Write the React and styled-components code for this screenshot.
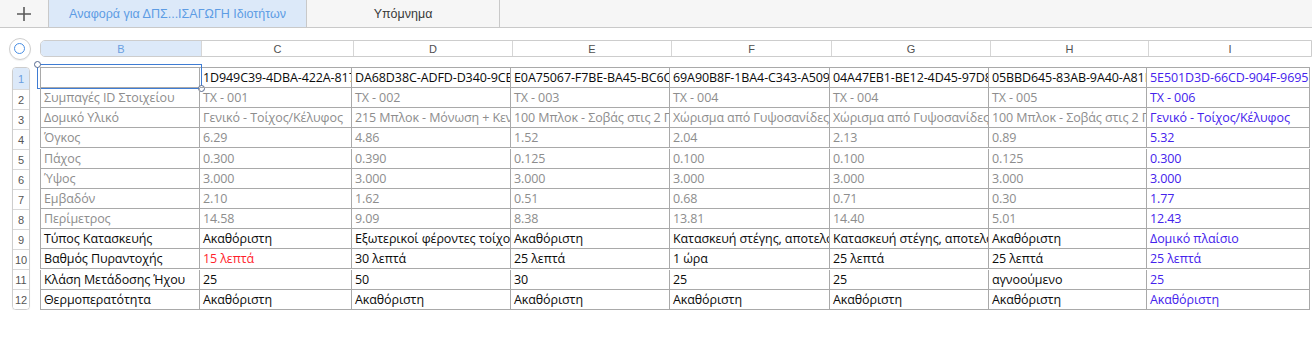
import React from "react";
import styled, { createGlobalStyle } from "styled-components";

const GlobalStyle = createGlobalStyle`
  html, body {
    margin: 0;
    padding: 0;
    background: #ffffff;
  }
  body {
    font-family: "Liberation Sans", Arial, sans-serif;
  }
`;

const COLS = [
  { key: "B", width: 160 },
  { key: "C", width: 152 },
  { key: "D", width: 159 },
  { key: "E", width: 159 },
  { key: "F", width: 160 },
  { key: "G", width: 159 },
  { key: "H", width: 158 },
  { key: "I", width: 163 },
];

const GRID_COLS = COLS.map((c) => `${c.width}px`).join(" ");

// tone: "id" (black), "prop" (gray), "text" (black)
const ROWS = [
  {
    tone: "id",
    cells: [
      "",
      "1D949C39-4DBA-422A-817",
      "DA68D38C-ADFD-D340-9CB",
      "E0A75067-F7BE-BA45-BC6C-",
      "69A90B8F-1BA4-C343-A509",
      "04A47EB1-BE12-4D45-97D8",
      "05BBD645-83AB-9A40-A81F",
      "5E501D3D-66CD-904F-9695",
    ],
  },
  {
    tone: "prop",
    cells: ["Συμπαγές ID Στοιχείου", "TX - 001", "TX - 002", "TX - 003", "TX - 004", "TX - 004", "TX - 005", "TX - 006"],
  },
  {
    tone: "prop",
    cells: [
      "Δομικό Υλικό",
      "Γενικό - Τοίχος/Κέλυφος",
      "215 Μπλοκ - Μόνωση + Κεν",
      "100 Μπλοκ - Σοβάς στις 2 Π",
      "Χώρισμα από Γυψοσανίδες",
      "Χώρισμα από Γυψοσανίδες",
      "100 Μπλοκ - Σοβάς στις 2 Π",
      "Γενικό - Τοίχος/Κέλυφος",
    ],
  },
  { tone: "prop", cells: ["Όγκος", "6.29", "4.86", "1.52", "2.04", "2.13", "0.89", "5.32"] },
  { tone: "prop", cells: ["Πάχος", "0.300", "0.390", "0.125", "0.100", "0.100", "0.125", "0.300"] },
  { tone: "prop", cells: ["Ύψος", "3.000", "3.000", "3.000", "3.000", "3.000", "3.000", "3.000"] },
  { tone: "prop", cells: ["Εμβαδόν", "2.10", "1.62", "0.51", "0.68", "0.71", "0.30", "1.77"] },
  { tone: "prop", cells: ["Περίμετρος", "14.58", "9.09", "8.38", "13.81", "14.40", "5.01", "12.43"] },
  {
    tone: "text",
    cells: [
      "Τύπος Κατασκευής",
      "Ακαθόριστη",
      "Εξωτερικοί φέροντες τοίχοι",
      "Ακαθόριστη",
      "Κατασκευή στέγης, αποτελο",
      "Κατασκευή στέγης, αποτελο",
      "Ακαθόριστη",
      "Δομικό πλαίσιο",
    ],
  },
  {
    tone: "text",
    cells: ["Βαθμός Πυραντοχής", "15 λεπτά", "30 λεπτά", "25 λεπτά", "1 ώρα", "25 λεπτά", "25 λεπτά", "25 λεπτά"],
    alert: 1,
  },
  { tone: "text", cells: ["Κλάση Μετάδοσης Ήχου", "25", "50", "30", "25", "25", "αγνοούμενο", "25"] },
  {
    tone: "text",
    cells: ["Θερμοπερατότητα", "Ακαθόριστη", "Ακαθόριστη", "Ακαθόριστη", "Ακαθόριστη", "Ακαθόριστη", "Ακαθόριστη", "Ακαθόριστη"],
  },
];

const TabBar = styled.div`
  display: flex;
  height: 27px;
  background: #f6f6f6;
  border-bottom: 1px solid #c9c9c9;
`;

const AddButton = styled.div`
  width: 48px;
  display: flex;
  align-items: center;
  justify-content: center;
`;

const Tab = styled.div`
  width: ${(p) => p.$width}px;
  display: flex;
  align-items: center;
  justify-content: center;
  font-size: 12.5px;
  color: ${(p) => (p.$active ? "#5d9ce4" : "#3a3a3a")};
  background: ${(p) => (p.$active ? "#dce9f9" : "transparent")};
  border-left: ${(p) => (p.$active ? "1px solid #c9c9c9" : "none")};
  border-right: 1px solid #c9c9c9;
  box-sizing: border-box;
`;

const Sheet = styled.div`
  padding-top: 12px;
`;

const HeaderLine = styled.div`
  display: flex;
  align-items: center;
  height: 17px;
`;

const Corner = styled.div`
  width: 40px;
  display: flex;
  justify-content: center;
`;

const CornerCircle = styled.div`
  width: 22px;
  height: 22px;
  margin-left: -1px;
  border-radius: 50%;
  border: 1px solid #cfcfcf;
  background: #ffffff;
  box-sizing: border-box;
  display: flex;
  align-items: center;
  justify-content: center;
  box-shadow: 0 1px 1px rgba(0, 0, 0, 0.06);
`;

const CornerDot = styled.div`
  width: 11px;
  height: 11px;
  border-radius: 50%;
  border: 1.5px solid #4a8fe4;
  box-sizing: border-box;
`;

const ColumnHeaders = styled.div`
  display: grid;
  grid-template-columns: ${GRID_COLS};
  height: 17px;
  box-sizing: border-box;
  border: 1px solid #cdcdcd;
  border-radius: 5px 0 0 5px;
  overflow: hidden;
`;

const ColumnHeader = styled.div`
  display: flex;
  align-items: center;
  justify-content: center;
  font-size: 11px;
  color: ${(p) => (p.$selected ? "#6a9fe0" : "#505050")};
  background: ${(p) => (p.$selected ? "#dce9f9" : "#ffffff")};
  border-left: ${(p) => (p.$first ? "none" : "1px solid #d6d6d6")};
`;

const Body = styled.div`
  display: flex;
  margin-top: 10px;
`;

const RowRail = styled.div`
  width: 40px;
  padding-left: 12px;
  box-sizing: border-box;
`;

const RowHeaders = styled.div`
  width: 18px;
  border: 1px solid #cdcdcd;
  border-radius: 4px;
  overflow: hidden;
  box-sizing: border-box;
  box-shadow: 0 1px 1px rgba(0, 0, 0, 0.08);
`;

const RowHeader = styled.div`
  height: ${(p) => (p.$first ? 21 : 20)}px;
  display: flex;
  align-items: center;
  justify-content: center;
  font-size: 11px;
  color: ${(p) => (p.$selected ? "#6a9fe0" : "#555555")};
  background: ${(p) => (p.$selected ? "#dce9f9" : "#ffffff")};
  border-top: ${(p) => (p.$first ? "none" : "1px solid #d9d9d9")};
  box-sizing: border-box;
`;

const Grid = styled.div`
  display: grid;
  grid-template-columns: ${GRID_COLS};
  border-top: 1px solid #a9a9a9;
`;

const toneColor = {
  id: "#0b0b0b",
  prop: "#8d8d8d",
  text: "#0b0b0b",
};

const Cell = styled.div`
  position: relative;
  height: 20px;
  box-sizing: border-box;
  border-right: 1px solid #a9a9a9;
  border-bottom: 1px solid #a9a9a9;
  border-left: ${(p) => (p.$lead ? "1px solid #a9a9a9" : "none")};
  padding: 0 0 0 3px;
  font-family: "Open Sans", "Liberation Sans", sans-serif;
  font-size: 12.5px;
  line-height: 19px;
  letter-spacing: -0.1px;
  white-space: nowrap;
  overflow: ${(p) => (p.$selected ? "visible" : "hidden")};
  color: ${(p) => (p.$alert ? "#ff1e2c" : p.$accent ? "#4422ec" : toneColor[p.$tone])};
`;

const Selection = styled.div`
  position: absolute;
  top: -4px;
  left: -4px;
  right: -3px;
  bottom: -2px;
  border: 1px solid #3f7cd3;
  pointer-events: none;
`;

const Handle = styled.div`
  position: absolute;
  width: 7px;
  height: 7px;
  border-radius: 50%;
  background: #ffffff;
  border: 1.5px solid #56698f;
  box-sizing: border-box;
  ${(p) => (p.$end ? "right: -4px; bottom: -4px;" : "left: -4px; top: -4px;")}
`;

function PlusIcon() {
  return (
    <svg width="16" height="16" viewBox="0 0 16 16">
      <path d="M8 1v14M1 8h14" stroke="#5a5a5a" strokeWidth="1.6" fill="none" />
    </svg>
  );
}

export default function App() {
  return (
    <>
      <GlobalStyle />
      <TabBar>
        <AddButton>
          <PlusIcon />
        </AddButton>
        <Tab $width={259} $active>
          Αναφορά για ΔΠΣ...ΙΣΑΓΩΓΗ Ιδιοτήτων
        </Tab>
        <Tab $width={193}>Υπόμνημα</Tab>
      </TabBar>
      <Sheet>
        <HeaderLine>
          <Corner>
            <CornerCircle>
              <CornerDot />
            </CornerCircle>
          </Corner>
          <ColumnHeaders>
            {COLS.map((c, i) => (
              <ColumnHeader key={c.key} $first={i === 0} $selected={i === 0}>
                {c.key}
              </ColumnHeader>
            ))}
          </ColumnHeaders>
        </HeaderLine>
        <Body>
          <RowRail>
            <RowHeaders>
              {ROWS.map((r, i) => (
                <RowHeader key={i} $first={i === 0} $selected={i === 0}>
                  {i + 1}
                </RowHeader>
              ))}
            </RowHeaders>
          </RowRail>
          <Grid>
            {ROWS.map((r, ri) =>
              r.cells.map((text, ci) => {
                const selected = ri === 0 && ci === 0;
                return (
                  <Cell
                    key={`${ri}-${ci}`}
                    $lead={ci === 0}
                    $tone={r.tone}
                    $accent={ci === COLS.length - 1}
                    $alert={r.alert === ci}
                    $selected={selected}
                  >
                    {text}
                    {selected && (
                      <Selection>
                        <Handle />
                        <Handle $end />
                      </Selection>
                    )}
                  </Cell>
                );
              })
            )}
          </Grid>
        </Body>
      </Sheet>
    </>
  );
}
